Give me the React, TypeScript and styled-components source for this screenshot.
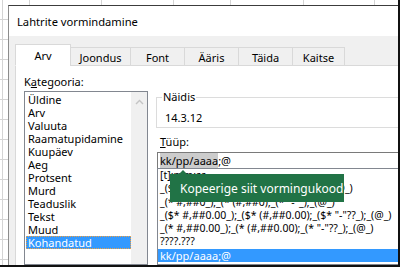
import styled, { createGlobalStyle } from "styled-components";

const GlobalStyle = createGlobalStyle`
  html, body {
    margin: 0;
    padding: 0;
    background: #fff;
  }
  body {
    font-family: "Segoe UI", "Noto Sans", "Open Sans", sans-serif;
    font-size: 11px;
    color: #000;
  }
`;

const CATEGORIES = [
  "Üldine",
  "Arv",
  "Valuuta",
  "Raamatupidamine",
  "Kuupäev",
  "Aeg",
  "Protsent",
  "Murd",
  "Teaduslik",
  "Tekst",
  "Muud",
  "Kohandatud",
];

const FORMATS = [
  "[t]:mm:ss",
  '_($* #,##0_);_($* (#,##0);_($* "-"_);_(@_)',
  '_(* #,##0_);_(* (#,##0);_(* "-"_);_(@_)',
  '_($* #,##0.00_);_($* (#,##0.00);_($* "-"??_);_(@_)',
  '_(* #,##0.00_);_(* (#,##0.00);_(* "-"??_);_(@_)',
  "????.???",
  "kk/pp/aaaa;@",
];

const TABS = [
  { label: "Arv", width: 56 },
  { label: "Joondus", width: 61 },
  { label: "Font", width: 55 },
  { label: "Ääris", width: 55 },
  { label: "Täida", width: 55 },
  { label: "Kaitse", width: 53 },
];

const Frame = styled.div`
  width: 402px;
  height: 269px;
  overflow: hidden;
  background: #fff;
`;

// spreadsheet behind the dialog
const Sheet = styled.div`
  box-sizing: border-box;
  width: 400px;
  height: 267px;
  display: flex;
  padding: 5px 0 0 8px;
  overflow: hidden;
  border-right: 2px solid #111;
  border-bottom: 2px solid #111;
  background:
    linear-gradient(#d4d4d4, #d4d4d4) 2px 0 / 1px 100% no-repeat,
    linear-gradient(#d4d4d4, #d4d4d4) 29px 0 / 1px 5px no-repeat,
    linear-gradient(#d4d4d4, #d4d4d4) 101px 0 / 1px 5px no-repeat,
    linear-gradient(#d4d4d4, #d4d4d4) 173px 0 / 1px 5px no-repeat,
    linear-gradient(#d4d4d4, #d4d4d4) 230px 0 / 1px 5px no-repeat,
    linear-gradient(#d4d4d4, #d4d4d4) 303px 0 / 1px 5px no-repeat,
    linear-gradient(#d4d4d4, #d4d4d4) 374px 0 / 1px 5px no-repeat,
    repeating-linear-gradient(
      to bottom,
      transparent 0 19px,
      #d4d4d4 19px 20px
    ),
    #fff;
`;

const Dialog = styled.div`
  flex: 1;
  min-width: 0;
  display: flex;
  flex-direction: column;
  overflow: hidden;
  border-top: 1px solid #3c3c3c;
  border-left: 1px solid #8c8c8c;
  background: #f0f0f0;
`;

const TitleBar = styled.div`
  height: 30px;
  display: flex;
  align-items: center;
  padding-left: 8px;
  background: #fff;
  font-size: 11.2px;
`;

const Body = styled.div`
  flex: 1;
  display: flex;
  flex-direction: column;
  padding: 8px 0 0 6px;
  min-height: 0;
`;

const Tabs = styled.div`
  display: flex;
  align-items: flex-end;
  height: 22px;
  margin-bottom: -1px;
  position: relative;
  z-index: 1;
`;

const Tab = styled.div<{ $active?: boolean; $width: number }>`
  box-sizing: border-box;
  width: ${(p) => p.$width}px;
  height: ${(p) => (p.$active ? 22 : 19)}px;
  margin-left: -1px;
  display: flex;
  align-items: center;
  justify-content: center;
  border: 1px solid #d9d9d9;
  border-bottom-color: ${(p) => (p.$active ? "#fff" : "#d9d9d9")};
  background: ${(p) => (p.$active ? "#fff" : "#f0f0f0")};
  padding-top: ${(p) => (p.$active ? 0 : 1)}px;

  &:first-child {
    margin-left: 0;
  }
`;

const Panel = styled.div`
  flex: 1;
  display: flex;
  gap: 8px;
  padding: 8px 0 0 8px;
  background: #fff;
  border-top: 1px solid #d9d9d9;
  border-left: 1px solid #d9d9d9;
  min-height: 0;
`;

const LeftColumn = styled.div`
  width: 124px;
  flex-shrink: 0;
  display: flex;
  flex-direction: column;
`;

const FieldLabel = styled.div<{ $indent?: number }>`
  height: 15px;
  line-height: 15px;
  padding-left: ${(p) => p.$indent ?? 0}px;

  & u {
    text-underline-offset: 1px;
  }
`;

const CategoryList = styled.div`
  margin-top: 2px;
  height: 200px;
  display: flex;
  border: 1px solid #828790;
`;

const CategoryItems = styled.div`
  flex: 1;
  padding: 1px 0 0 1px;
`;

const CategoryItem = styled.div<{ $selected?: boolean }>`
  box-sizing: border-box;
  height: 13px;
  line-height: 12px;
  padding-left: 1px;
  white-space: nowrap;
  color: ${(p) => (p.$selected ? "#fff" : "#000")};
  background: ${(p) => (p.$selected ? "#3399ff" : "transparent")};
  border: 1px dotted ${(p) => (p.$selected ? "#f0a040" : "transparent")};
  border-width: 1px 1px 0 1px;
  border-bottom: 1px dotted ${(p) => (p.$selected ? "#f0a040" : "transparent")};
`;

const Scrollbar = styled.div`
  width: 16px;
  background: #f0f0f0;
  display: flex;
  justify-content: center;
  padding-top: 7px;
  box-sizing: border-box;
`;

const RightColumn = styled.div`
  position: relative;
  width: 262px;
  flex-shrink: 0;
  display: flex;
  flex-direction: column;
`;

const SampleBox = styled.fieldset`
  margin: 16px 0 0 0;
  padding: 0 0 3px 5px;
  border: 1px solid #dcdcdc;
  min-width: 0;
`;

const SampleLegend = styled.legend`
  padding: 0 1px;
  line-height: 14px;
`;

const SampleValue = styled.div`
  margin-top: 7px;
  padding-left: 3px;
  height: 13px;
  line-height: 13px;
`;

const TypeLabelRow = styled.div`
  margin-top: 6px;
`;

const TypeInput = styled.div`
  box-sizing: border-box;
  margin: 3px 0 0 1px;
  height: 20px;
  display: flex;
  align-items: center;
  padding-left: 2px;
  border: 1px solid #7a7a7a;
  white-space: nowrap;
`;

const InactiveSelection = styled.span`
  background: #cccccc;
`;

const FormatList = styled.div`
  margin: -1px 0 0 1px;
  height: 120px;
  border: 1px solid #828790;
`;

const FormatItem = styled.div<{ $selected?: boolean }>`
  height: 13.3px;
  line-height: 13.3px;
  padding-left: 2px;
  font-size: 10.5px;
  white-space: nowrap;
  color: ${(p) => (p.$selected ? "#fff" : "#000")};
  background: ${(p) => (p.$selected ? "#3399ff" : "transparent")};
  font-size: ${(p) => (p.$selected ? 11 : 10.5)}px;
`;

const Tooltip = styled.div`
  position: absolute;
  left: 14px;
  top: 100px;
  width: 174px;
  height: 28px;
  box-sizing: border-box;
  padding-left: 10px;
  display: flex;
  align-items: center;
  background: #217346;
  color: #fff;
  font-size: 12px;
  white-space: nowrap;

  &::before {
    content: "";
    position: absolute;
    left: 9px;
    top: -4px;
    border-left: 4.5px solid transparent;
    border-right: 4.5px solid transparent;
    border-bottom: 4px solid #217346;
  }
`;

const ChevronUp = () => (
  <svg width="9" height="6" viewBox="0 0 9 6">
    <path d="M1 5 L4.5 1.5 L8 5" fill="none" stroke="#c4c4c4" strokeWidth="1.4" />
  </svg>
);

const App = () => {
  return (
    <Frame>
      <GlobalStyle />
      <Sheet>
        <Dialog>
          <TitleBar>Lahtrite vormindamine</TitleBar>
          <Body>
            <Tabs>
              {TABS.map((tab, i) => (
                <Tab key={tab.label} $active={i === 0} $width={tab.width}>
                  {tab.label}
                </Tab>
              ))}
            </Tabs>
            <Panel>
              <LeftColumn>
                <FieldLabel>
                  K<u>a</u>tegooria:
                </FieldLabel>
                <CategoryList>
                  <CategoryItems>
                    {CATEGORIES.map((name) => (
                      <CategoryItem key={name} $selected={name === "Kohandatud"}>
                        {name}
                      </CategoryItem>
                    ))}
                  </CategoryItems>
                  <Scrollbar>
                    <ChevronUp />
                  </Scrollbar>
                </CategoryList>
              </LeftColumn>

              <RightColumn>
                <SampleBox>
                  <SampleLegend>Näidis</SampleLegend>
                  <SampleValue>14.3.12</SampleValue>
                </SampleBox>
                <TypeLabelRow>
                  <FieldLabel $indent={4}>
                    <u>T</u>üüp:
                  </FieldLabel>
                </TypeLabelRow>
                <TypeInput>
                  <InactiveSelection>kk/pp/aaaa</InactiveSelection>;@
                </TypeInput>
                <FormatList>
                  {FORMATS.map((f, i) => (
                    <FormatItem key={f} $selected={i === FORMATS.length - 1}>
                      {f}
                    </FormatItem>
                  ))}
                </FormatList>
                <Tooltip>Kopeerige siit vormingukood</Tooltip>
              </RightColumn>
            </Panel>
          </Body>
        </Dialog>
      </Sheet>
    </Frame>
  );
};

export default App;
